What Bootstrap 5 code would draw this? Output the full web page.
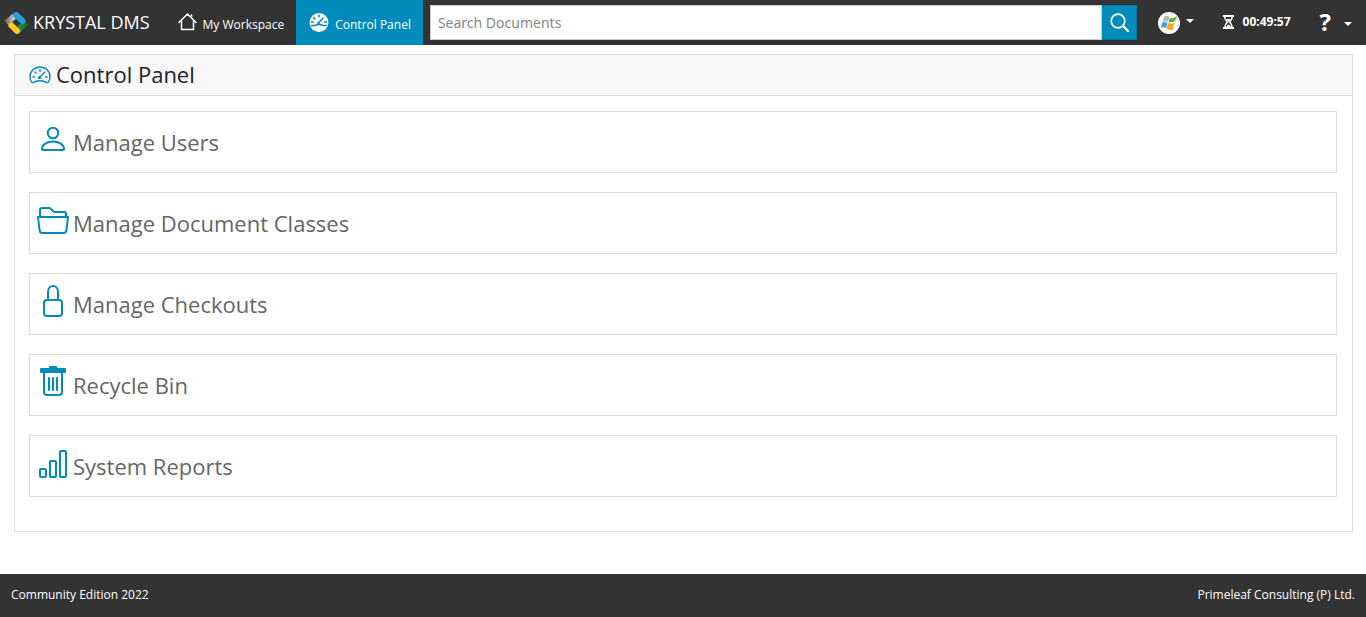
<!DOCTYPE html>
<html lang="en">
<head>
<meta charset="utf-8">
<meta name="viewport" content="width=device-width, initial-scale=1">
<title>Control Panel - KRYSTAL DMS</title>
<link rel="stylesheet" href="https://cdn.jsdelivr.net/npm/bootstrap@5.3.0/dist/css/bootstrap.min.css">
<style>
  :root { --blue: #008cba; --dark: #333; --line: #ddd; }
  body { font-family: "Open Sans", sans-serif; font-size: 12px; color: #222; }
  svg { display: block; flex: none; }
  .topbar { background: var(--dark); height: 45px; padding: 0 14px 0 4px; }
  .topbar a, .topbar button { color: #fff; text-decoration: none; }
  .brand-link { font-size: 18px; gap: 4px; margin-right: 14px; }
  .tab-link { padding: 0 12px 0 14px; gap: 6px; height: 45px; white-space: nowrap; }
  .tab-link span { padding-top: 4px; }
  .tab-link.active { background: var(--blue); padding: 0 12px 0 13px; }
  .search-form { margin-left: 7px; }
  .search-form .form-control { height: 35px; font-size: 14px; padding: 0 7px; border: 1px solid #ccc; border-radius: 0; color: #333; font-family: "Noto Sans", "Open Sans", sans-serif; }
  .search-form .form-control::placeholder { color: #888; }
  .search-btn { flex: none; width: 35px; height: 35px; padding: 0 0 0 8px; border: 1px solid #0079a1; border-left: 0; border-radius: 0; background: var(--blue); }
  .menu-btn { background: none; border: 0; padding: 0; gap: 6px; }
  .menu-btn::after { content: ""; width: 0; height: 0; border: 4px solid transparent; border-top-color: #fff; border-bottom: 0; }
  .user-btn { margin-left: 21px; }
  .user-btn::after { margin-bottom: 4px; }
  .timer { gap: 9px; margin: 0 29px; font-weight: 700; color: #fff; }
  .timer svg, .timer span { margin-bottom: 2px; }
  .help-btn { font-size: 24px; line-height: 30px; font-weight: 700; gap: 13px; padding-bottom: 2px; }
  .help-btn::after { margin-top: 4px; }
  .page-main { padding: 9px 13px 42px 14px; }
  .panel { border-radius: 0; border-color: var(--line); }
  .panel-head { background: #f7f7f7; border-bottom: 1px solid var(--line); padding: 0 14px; height: 41px; gap: 5px; }
  .panel-head h1 { font-size: 22px; line-height: 38px; font-weight: 400; margin: 0; padding-bottom: 2px; }
  .panel-list { padding: 15px 15px 34px 14px; gap: 19px; }
  .panel-item { border: 1px solid var(--line); height: 62px; padding: 0 7px; gap: 4px; font-size: 22px; color: #666; text-decoration: none; }
  .panel-item svg { margin-bottom: 6px; }
  .panel-item span { padding-top: 1px; }
  .line-icon { fill: none; stroke: var(--blue); stroke-width: 2; stroke-linecap: round; stroke-linejoin: round; }
  .gauge-icon { stroke-width: 1.4; }
  .page-foot { background: var(--dark); color: #fff; height: 43px; padding: 0 11px 2px; }
</style>
</head>
<body class="d-flex flex-column min-vh-100">
<nav class="topbar d-flex align-items-center" aria-label="Main">
  <a href="#" class="brand-link d-flex align-items-center text-nowrap">
    <svg width="25" height="26" viewBox="0 0 25 26" aria-hidden="true">
      <defs>
        <linearGradient id="grey" x1="0" x2="1"><stop stop-color="#777"/><stop offset="1" stop-color="#ccc"/></linearGradient>
        <linearGradient id="green" x1="0" x2="1"><stop stop-color="#2d9a4d"/><stop offset="1" stop-color="#0d6b30"/></linearGradient>
      </defs>
      <g fill="none" stroke-width="6">
        <path d="M2.500 13 10.500 6" stroke="url(#grey)"/>
        <path d="M13.500 20.500 22.500 12.500" stroke="url(#green)"/>
        <path d="M12 5 18.500 11" stroke="#229fd8" stroke-linecap="round"/>
        <path d="M7.500 15.500 13 21" stroke="#fecb20" stroke-linecap="round"/>
      </g>
    </svg>
    <span>KRYSTAL DMS</span>
  </a>
  <a href="#" class="tab-link d-flex align-items-center">
    <svg width="19" height="19" viewBox="0 0 19 19" fill="none" stroke="#fff" stroke-width="1.5" stroke-linecap="round" stroke-linejoin="round" aria-hidden="true"><path d="M1 9.500 9.500 1 18 9.500M3.500 8V16.500H15.500V8M13.500 2V4.500"/></svg>
    <span>My Workspace</span>
  </a>
  <a href="#" class="tab-link active d-flex align-items-center" aria-current="page">
    <svg width="20" height="20" viewBox="0 0 20 20" aria-hidden="true"><circle cx="10" cy="9.500" r="9.400" fill="#fff"/><g stroke="#008cba" fill="none" stroke-width="1.500" stroke-linecap="round"><path d="M2.500 12.500H6Q10 10.500 14 12.500H17.500M10 2V4M4.500 4.500 6 6M2.500 9H4.500M15.500 9H17.500M9.500 10 14 5"/></g><circle cx="9.500" cy="10" r="1.300" fill="#008cba"/></svg>
    <span>Control Panel</span>
  </a>
  <form class="search-form d-flex flex-grow-1" role="search" onsubmit="return false">
    <input class="form-control shadow-none" type="search" placeholder="Search Documents" aria-label="Search Documents">
    <button class="search-btn" type="submit" aria-label="Search">
      <svg width="20" height="20" viewBox="0 0 20 20" fill="none" stroke="#fff" stroke-width="1.700" stroke-linecap="round" aria-hidden="true"><circle cx="8" cy="8" r="6.800"/><path d="M13 13 18 18" stroke-width="2.300"/></svg>
    </button>
  </form>
  <button class="menu-btn user-btn d-flex align-items-center" type="button" aria-label="User menu">
    <svg width="22" height="22" viewBox="0 0 22 22" aria-hidden="true"><circle cx="11" cy="11" r="11" fill="#fff"/><path d="M6 5Q8.500 2.500 11.500 5L10 10Q7.500 8.500 4.500 10Z" fill="#b5b9bc"/><path d="M12 6Q15 7 19.500 4L17 9Q14 11 10.500 10Z" fill="#65ae35"/><path d="M4 11Q6.500 9 9.500 11L8 16Q6 14.500 3 16Z" fill="#34a7dd"/><path d="M10 11Q13 12.500 16.500 11L15 17.500Q12 19 8.500 16.500Z" fill="#faa71a"/></svg>
  </button>
  <div class="timer d-flex align-items-center" role="timer">
    <svg width="11" height="14" viewBox="0 0 11 14" aria-hidden="true"><path d="M0 1H11M0 13H11" stroke="#fff" stroke-width="1.800"/><path d="M2 1V3Q2 5 4.500 7Q2 9 2 13M9 1V3Q9 5 6.500 7Q9 9 9 13" fill="none" stroke="#fff" stroke-width="1.500"/><path d="M3 4H8L5.500 7ZM3 12Q5.500 7 8 12Z" fill="#fff"/></svg>
    <span>00:49:57</span>
  </div>
  <button class="menu-btn help-btn d-flex align-items-center" type="button" aria-label="Help">?</button>
</nav>

<main class="page-main">
  <section class="panel card">
    <header class="panel-head d-flex align-items-center">
      <svg width="22" height="18" viewBox="0 0 22 18" class="line-icon gauge-icon" aria-hidden="true"><path d="M3 16.500Q1 14.500 1 10.500C1 5 5.500 1 11 1S21 5 21 10.500Q21 14.500 19 16.500Q17.500 17 16.500 16Q11 13.500 5.500 16Q4.500 17 3 16.500ZM11 3.500V5.500M6 6 7 7M4 11H5.500M16.500 11H18M10 12 16 6"/><circle cx="10.500" cy="11.500" r=".8"/></svg>
      <h1>Control Panel</h1>
    </header>
    <div class="panel-list d-flex flex-column">
      <a href="#" class="panel-item d-flex align-items-center">
        <svg width="32" height="32" viewBox="0 0 32 32" class="line-icon" aria-hidden="true"><circle cx="16" cy="10" r="5.300"/><path d="M5 26C5 21.500 10 18.500 16 18.500S27 21.500 27 26Q27 27 26 27H6Q5 27 5 26Z"/></svg>
        <span>Manage Users</span>
      </a>
      <a href="#" class="panel-item d-flex align-items-center">
        <svg width="32" height="32" viewBox="0 0 32 32" class="line-icon" aria-hidden="true"><path d="M3 13V6Q3 4 5 4H12Q13 4 14 5L16 7Q17 8 18.500 8H27Q29 8 29 10V13M1 13H31L29.500 26Q29 29 26.500 29H5.500Q3 29 2.500 26Z"/></svg>
        <span>Manage Document Classes</span>
      </a>
      <a href="#" class="panel-item d-flex align-items-center">
        <svg width="32" height="32" viewBox="0 0 32 32" class="line-icon" aria-hidden="true"><path d="M11 15V7C11 -1 21 -1 21 7V15"/><rect x="7" y="15" width="18" height="16" rx="3"/></svg>
        <span>Manage Checkouts</span>
      </a>
      <a href="#" class="panel-item d-flex align-items-center">
        <svg width="32" height="32" viewBox="0 0 32 32" class="line-icon" aria-hidden="true"><path d="M13 2V1H19V2M4 3H28V6H4Z" fill="#008cba"/><path d="M7 7V26Q7 29 10 29H22Q25 29 25 26V7M12 12V24M16 12V24M20 12V24"/></svg>
        <span>Recycle Bin</span>
      </a>
      <a href="#" class="panel-item d-flex align-items-center">
        <svg width="32" height="32" viewBox="0 0 32 32" class="line-icon" aria-hidden="true"><rect x="3" y="22" width="6" height="8" rx="1"/><rect x="13" y="14" width="6" height="16" rx="1"/><rect x="23" y="4" width="6" height="26" rx="1"/></svg>
        <span>System Reports</span>
      </a>
    </div>
  </section>
</main>

<footer class="page-foot d-flex align-items-center justify-content-between mt-auto">
  <span>Community Edition 2022</span>
  <span>Primeleaf Consulting (P) Ltd.</span>
</footer>
<script src="https://cdn.jsdelivr.net/npm/bootstrap@5.3.0/dist/js/bootstrap.bundle.min.js"></script>
</body>
</html>
